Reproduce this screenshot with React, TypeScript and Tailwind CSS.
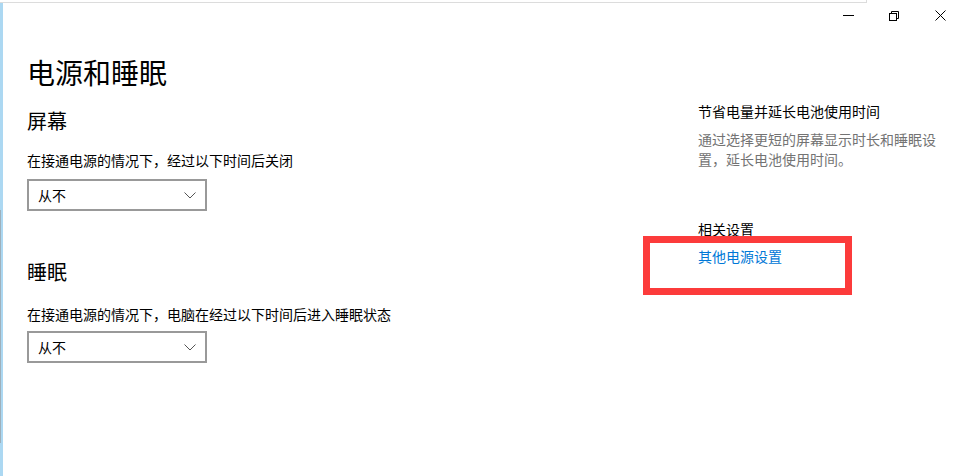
const Chevron = () => (
  <svg width="12" height="7" viewBox="0 0 12 7" fill="none">
    <path d="M0.5 0.5 L6 6 L11.5 0.5" stroke="#555" strokeWidth="1" />
  </svg>
)

const Select = ({ value }: { value: string }) => (
  <div className="w-[180px] h-[32px] border-2 border-[#999999] flex items-center justify-between pl-[9px] pr-[9px] text-[14px] leading-[14px] text-black">
    <span>{value}</span>
    <Chevron />
  </div>
)

export default function App() {
  return (
    <div className="relative w-[957px] h-[476px] bg-white overflow-hidden font-['Noto_Sans_CJK_SC',sans-serif] text-black">
      {/* window border behind */}
      <div className="h-[3px]">
        <div className="w-[867px] h-[3px] border-b border-r border-[#dcdcdc]" />
      </div>

      <div className="flex h-[473px]">
        {/* left accent strip */}
        <div className="w-[3px] bg-[#acd8f2] flex flex-col">
          <div className="h-[207px]" />
          <div className="w-[1px] h-[233px] bg-[#9fb0bb]" />
        </div>

        <div className="flex-1 flex flex-col">
          {/* window controls */}
          <div className="h-[25px] flex justify-end items-center">
            <div className="w-[46px] flex justify-center">
              <svg width="11" height="1" viewBox="0 0 11 1">
                <rect width="11" height="1" fill="#000" />
              </svg>
            </div>
            <div className="w-[46px] flex justify-center">
              <svg width="10" height="10" viewBox="0 0 10 10" fill="none">
                <rect x="0.5" y="2.5" width="7" height="7" stroke="#000" />
                <path d="M2.5 2.5 V0.5 H9.5 V7.5 H7.5" stroke="#000" />
              </svg>
            </div>
            <div className="w-[40px] flex justify-start pl-[18px]">
              <svg width="11" height="11" viewBox="0 0 11 11" fill="none">
                <path d="M0.5 0.5 L10.5 10.5 M10.5 0.5 L0.5 10.5" stroke="#000" />
              </svg>
            </div>
          </div>

          <div className="flex">
            {/* main settings */}
            <div className="w-[695px] pl-[24px]">
              <h1 className="mt-[30px] text-[28px] leading-[28px] font-normal">电源和睡眠</h1>

              <h2 className="mt-[25px] text-[20px] leading-[20px] font-normal">屏幕</h2>
              <p className="mt-[22px] text-[14px] leading-[14px]">在接通电源的情况下，经过以下时间后关闭</p>
              <div className="mt-[12px]">
                <Select value="从不" />
              </div>

              <h2 className="mt-[51px] text-[20px] leading-[20px] font-normal">睡眠</h2>
              <p className="mt-[25px] text-[14px] leading-[14px]">在接通电源的情况下，电脑在经过以下时间后进入睡眠状态</p>
              <div className="mt-[10px]">
                <Select value="从不" />
              </div>
            </div>

            {/* side panel */}
            <div className="w-[245px]">
              <p className="mt-[76px] text-[14px] leading-[14px]">节省电量并延长电池使用时间</p>
              <p className="mt-[11px] text-[14px] leading-[20px] text-[#737373]">
                通过选择更短的屏幕显示时长和睡眠设置，延长电池使用时间。
              </p>
              <p className="mt-[53px] text-[14px] leading-[14px]">相关设置</p>
              <a className="block mt-[13px] text-[14px] leading-[14px] text-[#0078d7] cursor-pointer">其他电源设置</a>
            </div>
          </div>
        </div>
      </div>

      {/* red annotation box */}
      <div className="absolute left-[643px] top-[236px] w-[209px] h-[59px] border-[7px] border-[#fc3b3b]" />
    </div>
  )
}
